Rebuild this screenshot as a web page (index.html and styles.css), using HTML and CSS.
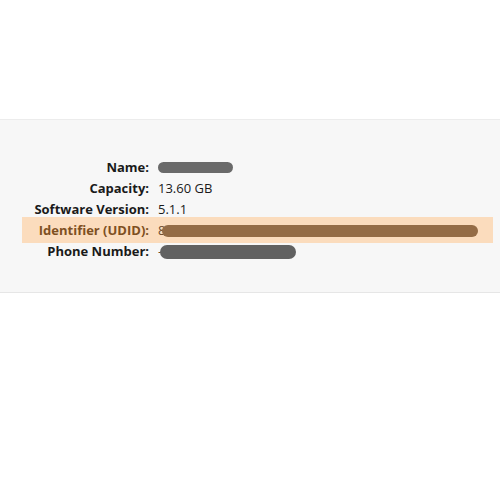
FILE: index.html
```
<!DOCTYPE html>
<html>
<head>
<meta charset="utf-8">
<link rel="stylesheet" href="styles.css">
</head>
<body>
<div class="top"></div>
<section class="panel">
  <div class="rows">
    <div class="row">
      <span class="label">Name:</span>
      <span class="value"><span class="blob blob-name"></span></span>
    </div>
    <div class="row">
      <span class="label">Capacity:</span>
      <span class="value">13.60 GB</span>
    </div>
    <div class="row">
      <span class="label">Software Version:</span>
      <span class="value">5.1.1</span>
    </div>
    <div class="row row-hl">
      <span class="label">Identifier (UDID):</span>
      <span class="value"><span class="lead">8</span><span class="blob blob-udid"></span></span>
    </div>
    <div class="row">
      <span class="label">Phone Number:</span>
      <span class="value"><span class="lead">-</span><span class="blob blob-phone"></span></span>
    </div>
  </div>
</section>
</body>
</html>
```
FILE: styles.css
```
html, body {
  margin: 0;
  padding: 0;
  background: #ffffff;
  font-family: "Open Sans", "DejaVu Sans", sans-serif;
  font-size: 13px;
  color: #1a1a1a;
}
.top {
  height: 119px;
}
.panel {
  height: 172px;
  background: #f7f7f7;
  border-top: 1px solid #ececec;
  border-bottom: 1px solid #e6e6e6;
}
.rows {
  margin-left: 22px;
  width: 471px;
  padding-top: 37px;
}
.row {
  display: grid;
  grid-template-columns: 127px 1fr;
  column-gap: 9px;
  height: 21px;
  line-height: 21px;
  align-items: center;
}
.label {
  font-weight: bold;
  text-align: right;
  white-space: nowrap;
}
.value {
  display: flex;
  align-items: center;
  white-space: nowrap;
}
.row-hl {
  background: #fbdcbd;
  padding: 3px 0 2px;
  margin: -3px 0 -2px;
}
.row-hl .label {
  color: #7e5022;
}
.lead {
  color: #6b4a2a;
}
.blob {
  display: inline-block;
  border-radius: 7px;
  filter: blur(0.5px);
}
.blob-name {
  width: 75px;
  height: 11px;
  background: #6a6a6a;
  margin-top: -1px;
}
.blob-udid {
  width: 316px;
  height: 12px;
  background: #946c46;
  margin-left: -3px;
}
.blob-phone {
  width: 136px;
  height: 14px;
  background: #616161;
  margin-left: -2px;
}
```
